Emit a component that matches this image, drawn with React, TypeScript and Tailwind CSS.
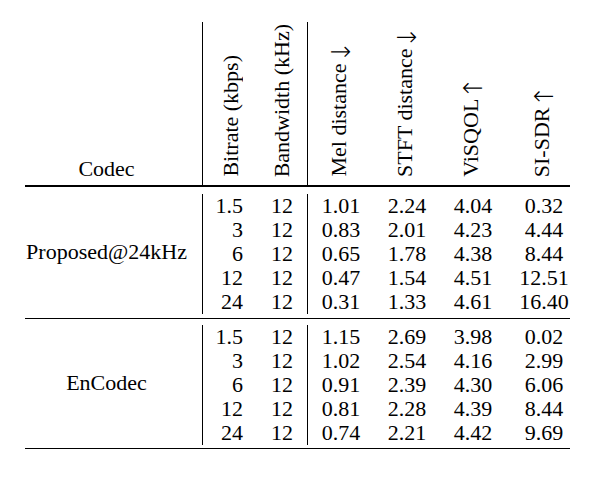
const proposed = [
  ["1.5", "12", "1.01", "2.24", "4.04", "0.32"],
  ["3", "12", "0.83", "2.01", "4.23", "4.44"],
  ["6", "12", "0.65", "1.78", "4.38", "8.44"],
  ["12", "12", "0.47", "1.54", "4.51", "12.51"],
  ["24", "12", "0.31", "1.33", "4.61", "16.40"],
];

const encodec = [
  ["1.5", "12", "1.15", "2.69", "3.98", "0.02"],
  ["3", "12", "1.02", "2.54", "4.16", "2.99"],
  ["6", "12", "0.91", "2.39", "4.30", "6.06"],
  ["12", "12", "0.81", "2.28", "4.39", "8.44"],
  ["24", "12", "0.74", "2.21", "4.42", "9.69"],
];

const vertical =
  "[writing-mode:vertical-rl] [text-orientation:sideways] rotate-180 whitespace-nowrap leading-[24px]";

// arrow set upright inside the rotated label, so it turns with the words
function Arrow({ up }: { up?: boolean }) {
  return (
    <span className="inline-block [writing-mode:horizontal-tb] rotate-90 align-middle font-['DejaVu_Sans',sans-serif] text-[26px] leading-[12px] font-extralight">
      {up ? "↑" : "↓"}
    </span>
  );
}

function Column({ rows, i, className }: { rows: string[][]; i: number; className: string }) {
  return (
    <div className={className}>
      {rows.map((r, k) => (
        <div key={k}>{r[i]}</div>
      ))}
    </div>
  );
}

function Group({
  name,
  rows,
  outer,
  extend,
}: {
  name: string;
  rows: string[][];
  outer: string;
  extend: string;
}) {
  return (
    <div className={`flex ${outer}`}>
      <div className={`w-[178px] border-r border-black flex items-center justify-center pr-[14px] ${extend}`}>
        {name}
      </div>
      <Column rows={rows} i={0} className="w-[52px] text-right pr-[12px]" />
      <Column rows={rows} i={1} className="w-[53px] text-right pr-[14px] border-r border-black" />
      <Column rows={rows} i={2} className="w-[66px] text-center" />
      <Column rows={rows} i={3} className="w-[66px] text-center" />
      <Column rows={rows} i={4} className="w-[66px] text-center" />
      <Column rows={rows} i={5} className="w-[64px] text-center pl-[12px]" />
    </div>
  );
}

export default function App() {
  return (
    <div className="w-[598px] h-[492px] bg-white text-black font-['Liberation_Serif','Times_New_Roman',serif] text-[22px] leading-[24px]">
      <div className="ml-[25px] pt-[22px] w-[545px]">
        <div className="flex h-[163px]">
          <div className="w-[178px] border-r border-black flex items-end justify-center pr-[14px] pb-[4px]">
            Codec
          </div>
          <div className="w-[52px] flex items-end justify-end pr-[12px] pb-[8px]">
            <span className={vertical}>Bitrate (kbps)</span>
          </div>
          <div className="w-[53px] flex items-end justify-end pr-[13px] pb-[8px] border-r border-black">
            <span className={vertical}>Bandwidth (kHz)</span>
          </div>
          <div className="w-[66px] flex items-end justify-center pr-[4px] pb-[8px]">
            <span className={vertical}>
              Mel distance <Arrow />
            </span>
          </div>
          <div className="w-[66px] flex items-end justify-center pr-[4px] pb-[8px]">
            <span className={vertical}>
              STFT distance <Arrow />
            </span>
          </div>
          <div className="w-[66px] flex items-end justify-center pr-[4px] pb-[8px]">
            <span className={vertical}>
              ViSQOL <Arrow up />
            </span>
          </div>
          <div className="w-[64px] flex items-end justify-center pl-[12px] pr-[3px] pb-[8px]">
            <span className={vertical}>
              SI-SDR <Arrow up />
            </span>
          </div>
        </div>
        <div className="h-[1.5px] bg-black" />
        <Group name="Proposed@24kHz" rows={proposed} outer="pt-[7px] pb-[4px]" extend="pb-[4px]" />
        <div className="h-[1px] bg-black" />
        <Group name="EnCodec" rows={encodec} outer="pt-[6px] pb-[3px]" extend="pb-[3px]" />
        <div className="h-[1.5px] bg-black" />
      </div>
    </div>
  );
}
